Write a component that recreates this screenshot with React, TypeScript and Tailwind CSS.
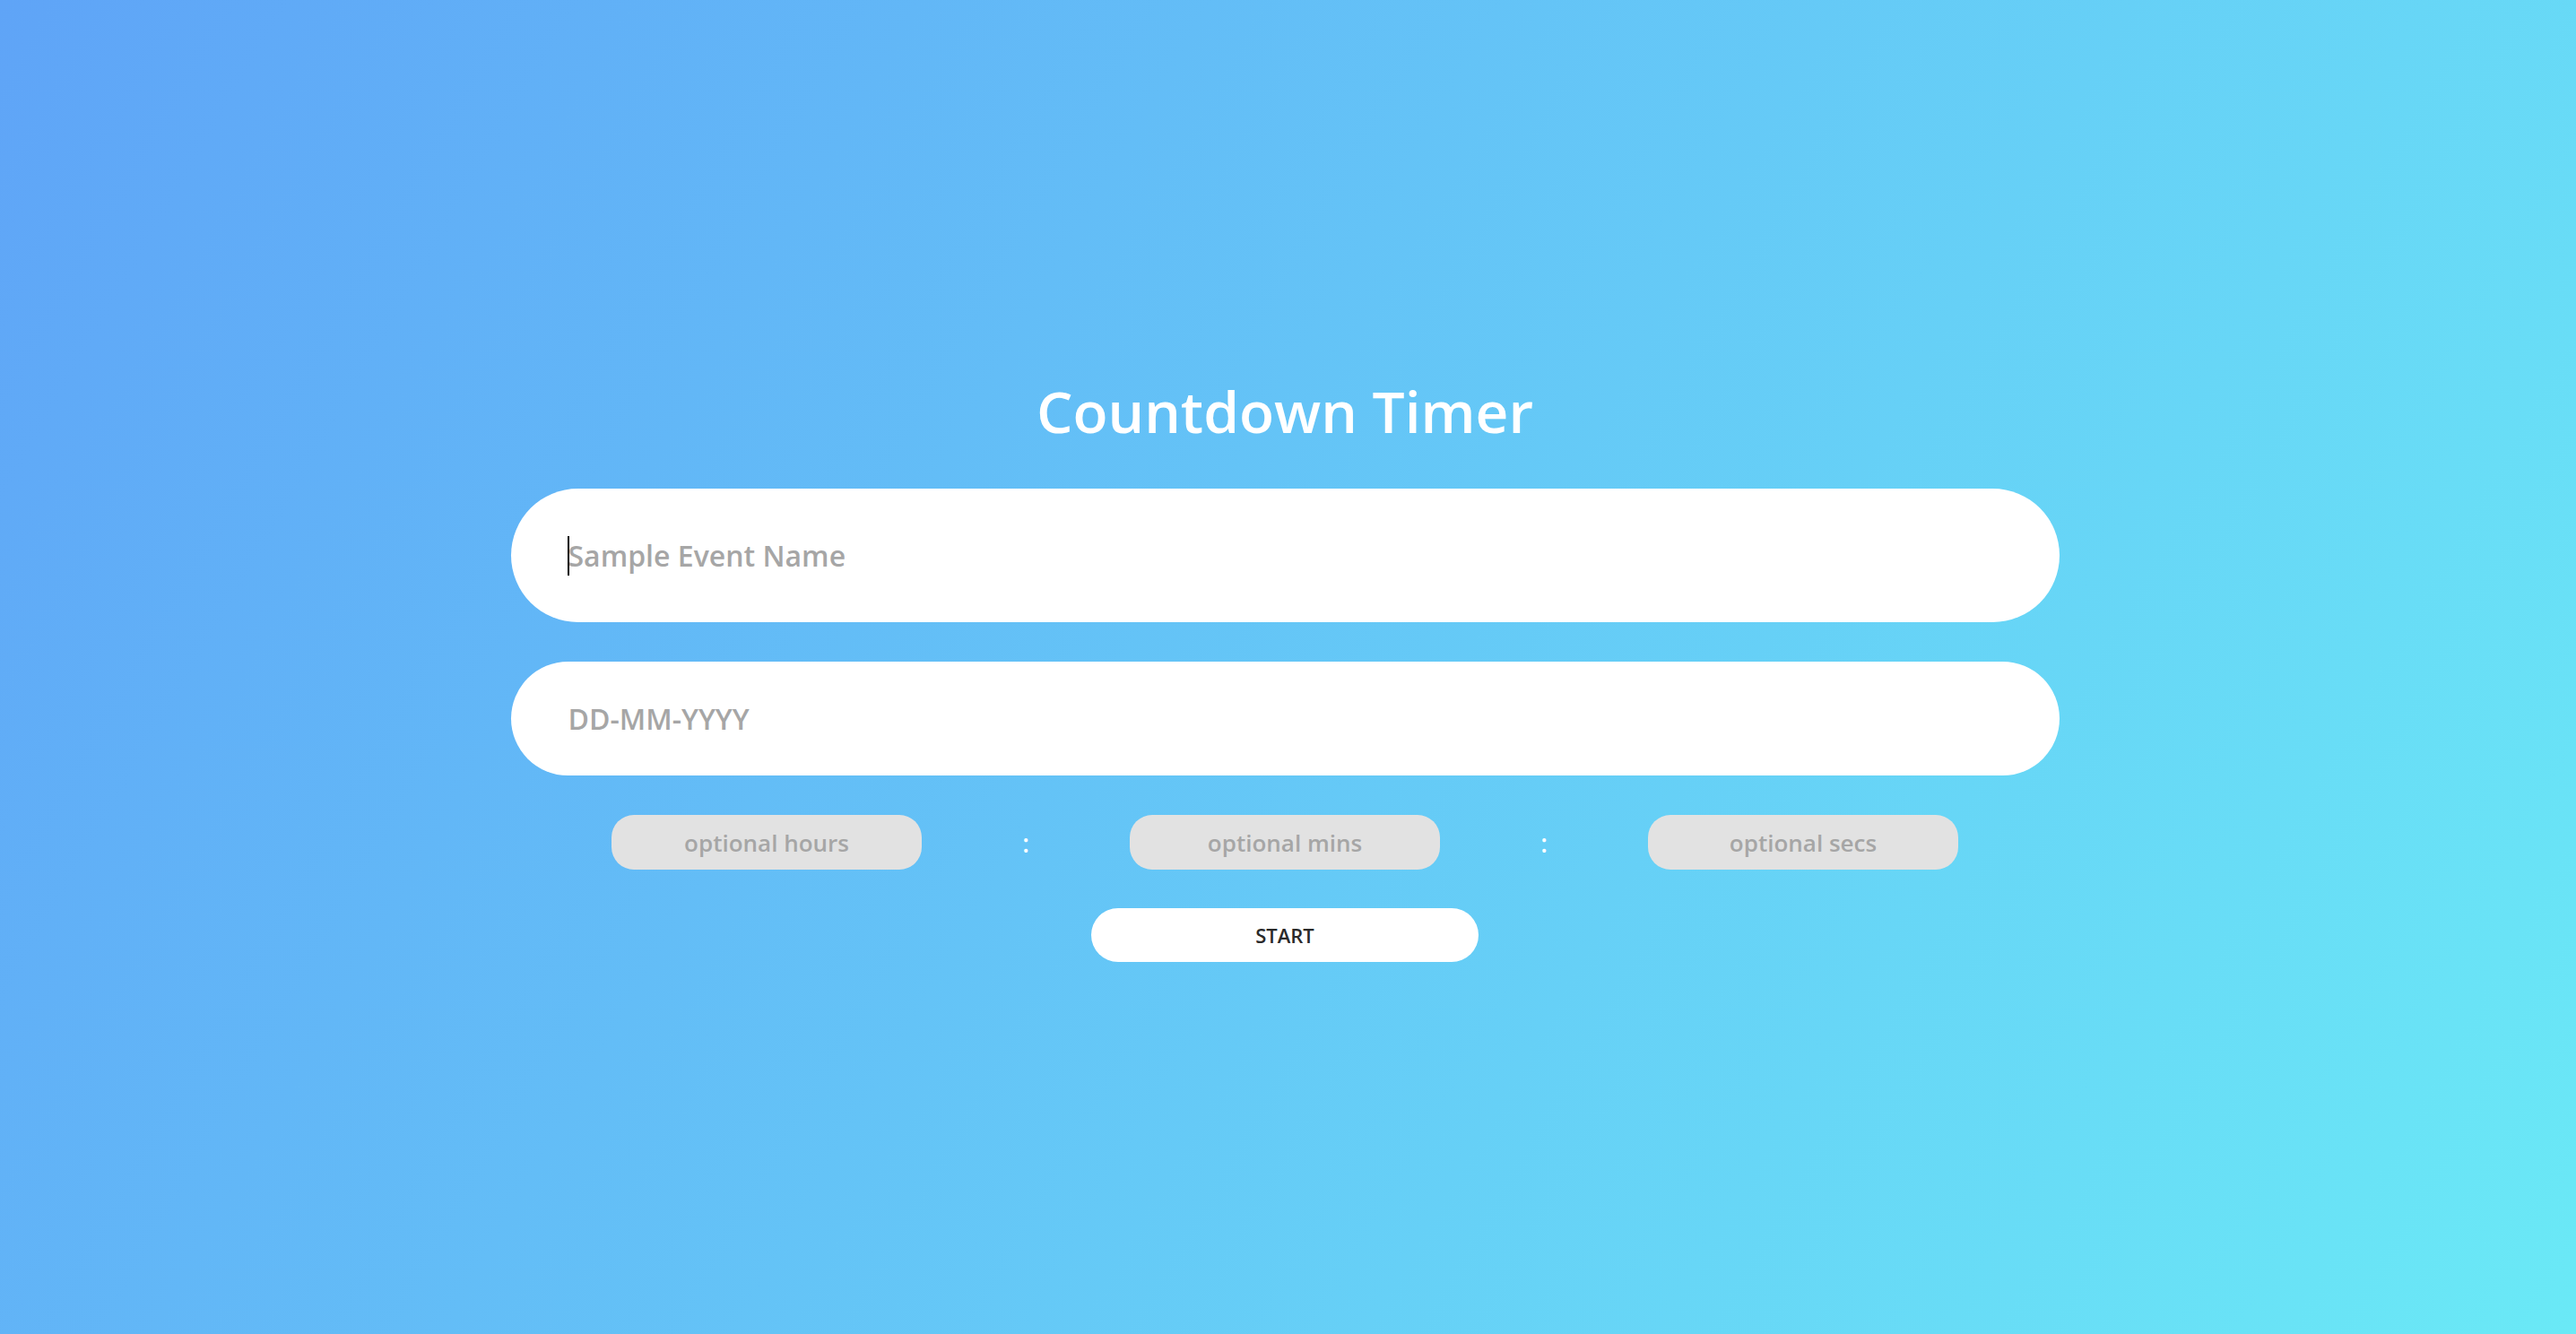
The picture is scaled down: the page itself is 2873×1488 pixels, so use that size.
import React, { useState } from 'react';

const App: React.FC = () => {
  const [eventName, setEventName] = useState('');
  const [date, setDate] = useState('');
  const [hours, setHours] = useState('');
  const [mins, setMins] = useState('');
  const [secs, setSecs] = useState('');

  return (
    <div className="min-h-screen w-full flex items-center justify-center pr-[7px] bg-[linear-gradient(120deg,#5fa4f7,#6ae9f6)] font-['Open_Sans',sans-serif]">
      <div className="flex flex-col items-center">
        <h1 className="text-[64px] leading-[88px] font-semibold text-white">Countdown Timer</h1>

        {/* Event name - shown focused with caret */}
        <div className="relative mt-[42px]">
          <input
            value={eventName}
            onChange={(e) => setEventName(e.target.value)}
            placeholder="Sample Event Name"
            className="w-[1727px] h-[149px] rounded-full bg-white pl-[64px] pr-10 text-[32px] font-semibold text-gray-700 placeholder:text-[#a6a6a6] outline-none"
          />
          {eventName === '' && (
            <span className="absolute left-[63px] top-[53px] w-[2px] h-[44px] bg-black" />
          )}
        </div>

        <input
          value={date}
          onChange={(e) => setDate(e.target.value)}
          placeholder="DD-MM-YYYY"
          className="mt-[44px] w-[1727px] h-[127px] rounded-full bg-white pl-[64px] pr-10 text-[32px] font-semibold text-gray-700 placeholder:text-[#a6a6a6] outline-none"
        />

        {/* Optional time fields */}
        <div className="mt-[44px] flex items-center gap-[112px]">
          <input
            value={hours}
            onChange={(e) => setHours(e.target.value)}
            placeholder="optional hours"
            className="w-[346px] h-[61px] rounded-[25px] bg-[#e2e2e2] text-center text-[26px] font-semibold text-gray-700 placeholder:text-[#a6a6a6] outline-none"
          />
          <span className="w-[8px] text-center text-[28px] font-semibold text-white">:</span>
          <input
            value={mins}
            onChange={(e) => setMins(e.target.value)}
            placeholder="optional mins"
            className="w-[346px] h-[61px] rounded-[25px] bg-[#e2e2e2] text-center text-[26px] font-semibold text-gray-700 placeholder:text-[#a6a6a6] outline-none"
          />
          <span className="w-[8px] text-center text-[28px] font-semibold text-white">:</span>
          <input
            value={secs}
            onChange={(e) => setSecs(e.target.value)}
            placeholder="optional secs"
            className="w-[346px] h-[61px] rounded-[25px] bg-[#e2e2e2] text-center text-[26px] font-semibold text-gray-700 placeholder:text-[#a6a6a6] outline-none"
          />
        </div>

        <button className="mt-[43px] w-[432px] h-[60px] rounded-full bg-white text-[22px] font-semibold text-[#2a2a2a]">
          START
        </button>
      </div>
    </div>
  );
};

export default App;
